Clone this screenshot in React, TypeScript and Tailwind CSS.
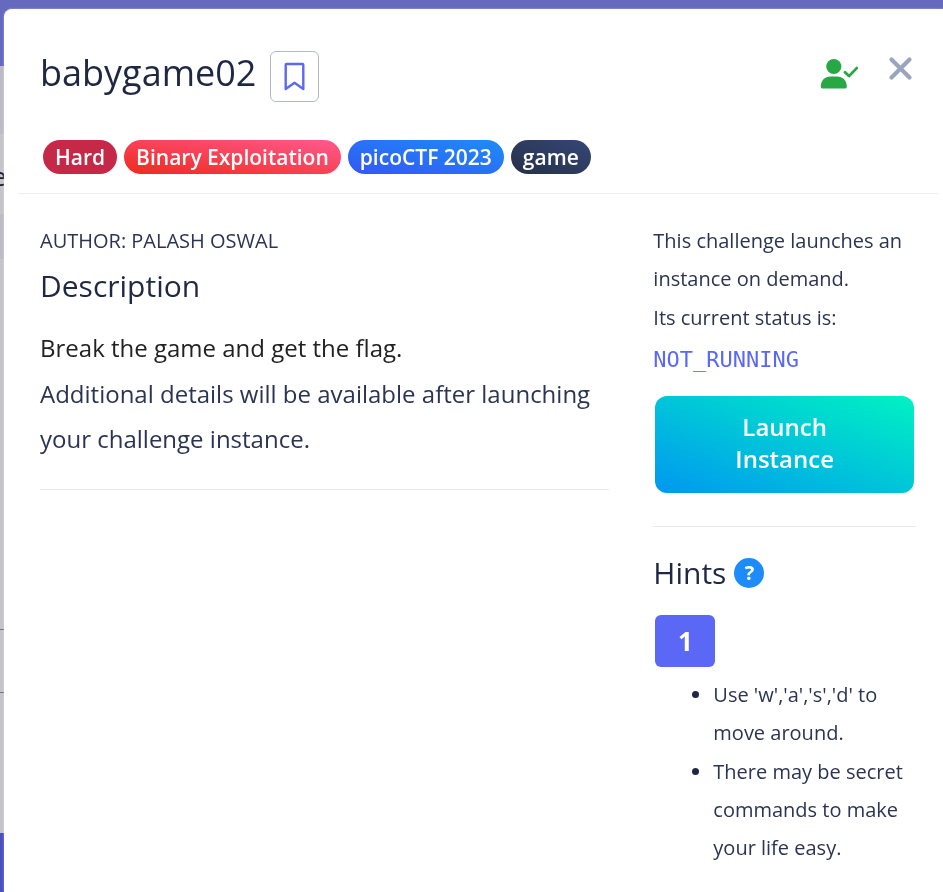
import type { ReactNode } from "react";

function Tag({ className, children }: { className: string; children: ReactNode }) {
  return (
    <li className={`h-[34px] rounded-full px-3 text-[21px] leading-[34px] font-semibold text-white ${className}`}>
      {children}
    </li>
  );
}

function Backdrop() {
  return (
    <div aria-hidden="true" className="fixed inset-0 flex flex-col overflow-hidden bg-[#c6c4c9]">
      <div className="h-[66px] bg-[#666abf] shadow-[0_1px_4px_rgba(0,0,0,0.6)]" />
      <div className="h-[68px] bg-[#bcbbc6]" />
      <div className="flex h-20 items-center">
        <span className="-ml-2 pt-1 text-[26px] text-[#181c38]">e</span>
      </div>
      <div className="h-[45px] bg-[#bcbbc6]" />
      <div className="h-[371px] border-b border-[#77757c]" />
      <div className="h-[63px] border-b border-[#77757c]" />
      <div className="h-[140px]" />
      <div className="flex-1 bg-[#4a50bf]" />
    </div>
  );
}

export default function App() {
  return (
    <div className="min-h-screen font-['Open_Sans','Noto_Sans',sans-serif] text-[#1f2843]">
      <Backdrop />
      <main
        role="dialog"
        aria-labelledby="challenge-title"
        className="relative mt-[9px] ml-1 min-h-[calc(100vh-9px)] rounded-tl-lg bg-white pr-[5px] pl-[14px] shadow-[0_0_2px_rgba(255,255,255,0.5)]"
      >
        <header className="border-b border-[#eeeeef] pr-6 pl-[22px] pt-[42px] pb-[19px]">
          <div className="flex items-start justify-between">
            <div className="flex items-center gap-[14px]">
              <h1 id="challenge-title" className="-mt-2 text-[36px] leading-[50px]">babygame02</h1>
              <button
                type="button"
                aria-label="Bookmark challenge"
                className="flex h-[51px] w-[49px] items-center justify-center rounded-md border border-[#b3b9c2] text-[#5b68f6]"
              >
                <svg viewBox="0 0 24 30" className="h-[30px] w-6" fill="none" stroke="currentColor" strokeWidth="2.4" strokeLinejoin="round">
                  <path d="M3.500 2h16q.8 0 .8 1v24l-8.800-6.200-8.800 6.200V3q0-1 .8-1z" />
                </svg>
              </button>
            </div>
            <div className="flex items-start gap-[30px]">
              <svg viewBox="0 0 38 32" className="mt-[7px] h-8 w-[38px]" role="img" aria-label="Solved by you">
                <circle cx="13.800" cy="8.500" r="7.600" fill="#28a745" />
                <path d="M.8 28.500C.8 22 5.300 18.500 10.300 18.500h7c5 0 9.500 3.500 9.500 10q0 2-1.500 2H2.300q-1.500 0-1.500-2z" fill="#28a745" />
                <path d="M25 14.300l4 3.800 7.700-8" fill="none" stroke="#28a745" strokeWidth="2.800" strokeLinecap="round" strokeLinejoin="round" />
              </svg>
              <button type="button" aria-label="Close" className="mt-[5px] text-[#9aa3bf]">
                <svg viewBox="0 0 26 26" className="size-[26px]" fill="none" stroke="currentColor" strokeWidth="4.200" strokeLinecap="round">
                  <path d="M3.500 3.500l18 18M21.500 3.500l-18 18" />
                </svg>
              </button>
            </div>
          </div>
          <ul className="mt-[38px] ml-[3px] flex flex-wrap gap-[7px]">
            <Tag className="bg-[#c62848]">Hard</Tag>
            <Tag className="bg-[linear-gradient(to_top_right,#f02a1e,#ff5a8f)]">Binary Exploitation</Tag>
            <Tag className="bg-[linear-gradient(to_top_right,#3358f4,#1d8cf8)]">picoCTF 2023</Tag>
            <Tag className="bg-[linear-gradient(to_top_right,#263148,#344675)]">game</Tag>
          </ul>
        </header>

        <div className="grid grid-cols-3">
          <section className="col-span-2 px-[22px] pt-7">
            <p className="text-[20px] leading-[38px] text-[#2b3553]">AUTHOR: PALASH OSWAL</p>
            <h2 className="mt-1 text-[30px] leading-[44px]">Description</h2>
            <p className="mt-[17px] text-[24px] leading-[46px] text-[#222222]">Break the game and get the flag.</p>
            <p className="text-[24px] leading-[45px] text-[#2b3553]">
              Additional details will be available after launching your challenge instance.
            </p>
            <hr className="mt-7 border-[#e8e8e8]" />
          </section>

          <aside className="px-[22px] pt-7">
            <p className="text-[20px] leading-[38px] text-[#2b3553]">This challenge launches an instance on demand.</p>
            <p className="mt-px text-[20px] leading-[38px] text-[#2b3553]">Its current status is:</p>
            <p className="mt-1 font-['DejaVu_Sans_Mono',monospace] text-[22px] leading-[38px] text-[#5b68f6]">NOT_RUNNING</p>
            <button
              type="button"
              className="ml-[2px] mt-[17px] flex h-[97px] w-[calc(100%-4px)] items-center justify-center rounded-xl bg-[linear-gradient(to_top_right,#0098f0,#00f2c3)] px-16 pb-1 text-[24px] leading-8 font-semibold text-white"
            >
              Launch Instance
            </button>
            <hr className="mt-[33px] border-[#e8e8e8]" />
            <div className="mt-6 flex items-center gap-2">
              <h2 className="text-[30px] leading-[44px]">Hints</h2>
              <button type="button" aria-label="About hints" className="size-[30px] rounded-full bg-[#1d8cf8] text-[20px] leading-[30px] font-bold text-white">
                ?
              </button>
            </div>
            <button type="button" className="mt-5 ml-[2px] h-[52px] w-[60px] rounded-md bg-[#5b68f6] text-[26px] font-bold text-white">
              1
            </button>
            <ul className="mt-[9px] list-disc space-y-px pl-[60px] text-[20px] leading-[38px] text-[#2b3553] marker:text-[#1f2843]">
              <li>Use 'w','a','s','d' to move around.</li>
              <li>There may be secret commands to make your life easy.</li>
            </ul>
          </aside>
        </div>
      </main>
    </div>
  );
}
